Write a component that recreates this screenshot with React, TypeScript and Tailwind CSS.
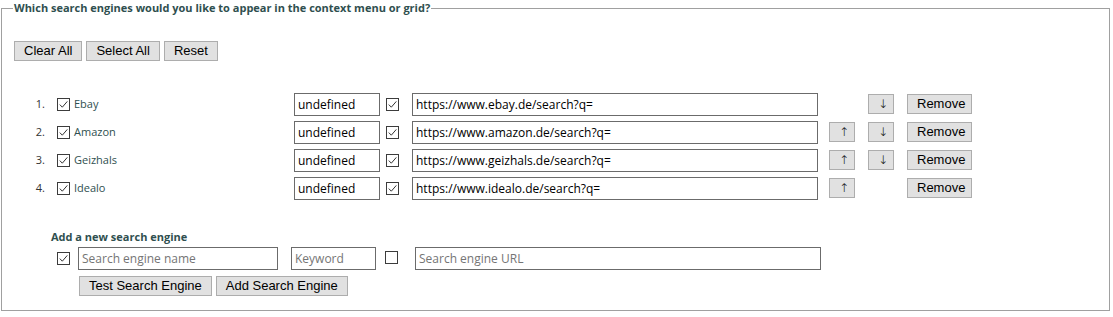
import React from "react";

const ENGINES = [
  { name: "Ebay", url: "https://www.ebay.de/search?q=" },
  { name: "Amazon", url: "https://www.amazon.de/search?q=" },
  { name: "Geizhals", url: "https://www.geizhals.de/search?q=" },
  { name: "Idealo", url: "https://www.idealo.de/search?q=" },
];

const UI = "font-['Open_Sans',sans-serif]";
const BTN =
  "h-[20px] border border-[#adadad] bg-[#e1e1e1] px-[9px] font-['Liberation_Sans',Arial,sans-serif] text-[13px] leading-[18px] text-black";
const FIELD =
  "h-[23px] border border-[#6b6b6b] bg-white px-[3px] text-[12px] text-black outline-none placeholder:text-[#757575] " + UI;
const ARROW = "font-['DejaVu_Sans',sans-serif] text-[12px] font-light text-black";

function Check({ checked }: { checked?: boolean }) {
  return (
    <span className="inline-flex h-[13px] w-[13px] shrink-0 items-center justify-center border border-[#3c3c3c] bg-white">
      {checked && (
        <svg viewBox="0 0 11 11" className="h-[11px] w-[11px]">
          <path d="M1.8 5.6 L4.3 8.2 L9.3 2.4" stroke="#333" strokeWidth="1" fill="none" />
        </svg>
      )}
    </span>
  );
}

export default function App() {
  return (
    <div className="bg-white">
      <fieldset className="ml-px w-[1109px] border border-[#a0a0a0] pb-[14px] pl-[11px]">
        <legend className={`px-[1px] text-[11px] font-bold leading-[16px] text-[#2f4f4f] ${UI}`}>
          Which search engines would you like to appear in the context menu or grid?
        </legend>

        <div className="mt-[25px] flex gap-[4px] pl-[1px]">
          <button type="button" className={BTN}>Clear All</button>
          <button type="button" className={BTN}>Select All</button>
          <button type="button" className={BTN}>Reset</button>
        </div>

        <ol className="mt-[29px]">
          {ENGINES.map((e, idx) => (
            <li key={e.name} className="flex h-[28px] items-center">
              <span className={`w-[34px] pr-[2px] text-right text-[11px] text-[#333] ${UI}`}>{idx + 1}.</span>
              <span className="ml-[10px]">
                <Check checked />
              </span>
              <span className={`ml-[4px] w-[220px] text-[11px] text-[#2f4f4f] ${UI}`}>{e.name}</span>
              <input readOnly value="undefined" className={`${FIELD} w-[86px]`} />
              <span className="ml-[6px]">
                <Check checked />
              </span>
              <input readOnly value={e.url} className={`${FIELD} ml-[13px] w-[406px]`} />
              <button
                type="button"
                className={`${BTN} ml-[11px] w-[26px] px-0 ${idx === 0 ? "invisible" : ""}`}
              >
                <span className={ARROW}>↑</span>
              </button>
              <button
                type="button"
                className={`${BTN} ml-[13px] w-[26px] px-0 ${idx === ENGINES.length - 1 ? "invisible" : ""}`}
              >
                <span className={ARROW}>↓</span>
              </button>
              <button type="button" className={`${BTN} ml-[13px] w-[65px] px-0`}>
                Remove
              </button>
            </li>
          ))}
        </ol>

        <div className="mt-[27px] pl-[38px]">
          <h3 className={`text-[11px] font-bold leading-[15px] text-[#2f4f4f] ${UI}`}>Add a new search engine</h3>
          <div className="mt-[2px] flex items-center">
            <span className="ml-[6px]">
              <Check checked />
            </span>
            <input placeholder="Search engine name" className={`${FIELD} ml-[8px] w-[200px]`} />
            <input placeholder="Keyword" className={`${FIELD} ml-[13px] w-[85px]`} />
            <span className="ml-[9px]">
              <Check />
            </span>
            <input placeholder="Search engine URL" className={`${FIELD} ml-[17px] w-[406px]`} />
          </div>
          <div className="mt-[6px] flex gap-[4px] pl-[28px]">
            <button type="button" className={`${BTN} px-[8px]`}>Test Search Engine</button>
            <button type="button" className={`${BTN} px-[8px]`}>Add Search Engine</button>
          </div>
        </div>
      </fieldset>
    </div>
  );
}
